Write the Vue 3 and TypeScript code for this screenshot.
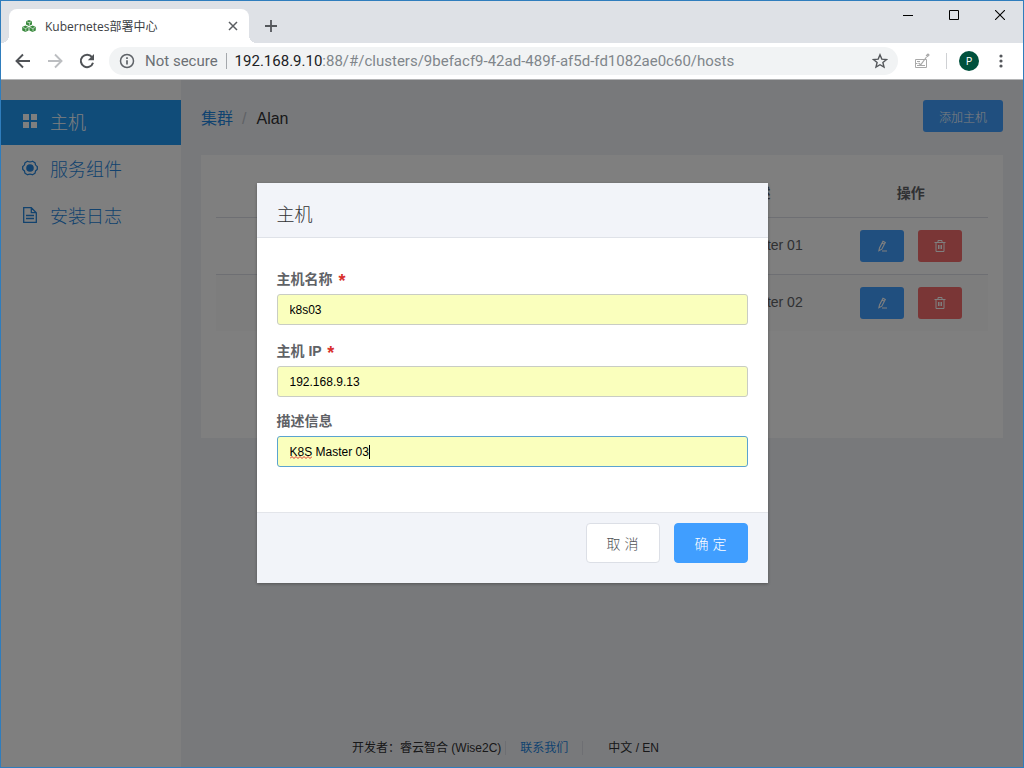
<script setup lang="ts">
import { ref } from 'vue'

interface MenuItem {
  icon: 'grid' | 'gear' | 'doc'
  label: string
  active: boolean
}

interface Host {
  id: number
  description: string
}

const menu: MenuItem[] = [
  { icon: 'grid', label: '主机', active: true },
  { icon: 'gear', label: '服务组件', active: false },
  { icon: 'doc', label: '安装日志', active: false },
]

const hosts: Host[] = [
  { id: 1, description: 'K8S Master 01' },
  { id: 2, description: 'K8S Master 02' },
]

const hostName = ref('k8s03')
const hostIp = ref('192.168.9.13')
const description = ref('K8S Master 03')
</script>

<template>
  <div class="window">
    <header class="chrome">
      <div class="tabstrip">
        <div class="tab">
          <svg class="favicon" viewBox="0 0 14 12" width="14" height="12" aria-hidden="true">
            <g fill="#3a8a3e">
              <path d="M7 0l3 1.200v3.400L7 6 4 4.600V1.200z" />
              <path d="M3.400 5.600l3.200 1.300v3.600L3.400 12 .2 10.500V6.900z" />
              <path d="M10.600 5.600l3.200 1.300v3.600L10.600 12l-3.200-1.500V6.900z" />
            </g>
            <g fill="none" stroke="#fff" stroke-width=".6">
              <path d="M4.500 1.700L7 2.700l2.500-1M7.400 2.800v2.700M.8 7.400l2.600 1.100 2.600-1.100M3.800 8.500v2.900M8 7.400l2.600 1.100 2.600-1.100M11 8.500v2.900" />
            </g>
          </svg>
          <span class="tab-title">Kubernetes部署中心</span>
          <button class="icon-btn tab-close" type="button" aria-label="Close tab">
            <svg viewBox="0 0 10 10" width="10" height="10"><path d="M1 1l8 8M9 1L1 9" stroke="#5a5d61" stroke-width="1.500" /></svg>
          </button>
        </div>
        <button class="icon-btn new-tab" type="button" aria-label="New tab">
          <svg viewBox="0 0 12 12" width="12" height="12"><path d="M6 0v12M0 6h12" stroke="#54575b" stroke-width="1.800" /></svg>
        </button>
        <div class="window-controls">
          <button class="icon-btn" type="button" aria-label="Minimize">
            <svg viewBox="0 0 10 10" width="10" height="10"><path d="M0 5.500h10" stroke="#000" /></svg>
          </button>
          <button class="icon-btn" type="button" aria-label="Maximize">
            <svg viewBox="0 0 10 10" width="10" height="10"><path d="M.5.5h9v9h-9z" fill="none" stroke="#000" /></svg>
          </button>
          <button class="icon-btn" type="button" aria-label="Close">
            <svg viewBox="0 0 10 10" width="10" height="10"><path d="M0 0l10 10M10 0L0 10" stroke="#000" stroke-width="1.100" /></svg>
          </button>
        </div>
      </div>
      <div class="toolbar">
        <button class="icon-btn nav" type="button" aria-label="Back">
          <svg viewBox="0 0 16 16" width="16" height="16"><path d="M15 8H2M8 1.500L1.500 8 8 14.500" fill="none" stroke="#505357" stroke-width="1.900" /></svg>
        </button>
        <button class="icon-btn nav" type="button" aria-label="Forward">
          <svg viewBox="0 0 16 16" width="16" height="16"><path d="M1 8h13M8 1.500L14.500 8 8 14.500" fill="none" stroke="#bcbec1" stroke-width="1.900" /></svg>
        </button>
        <button class="icon-btn nav" type="button" aria-label="Reload">
          <svg viewBox="0 0 16 16" width="16" height="16"><path d="M13 4.200A6.200 6.200 0 1 0 14 9.700" fill="none" stroke="#505357" stroke-width="2" /><path d="M15 1v6.200H8.800z" fill="#505357" /></svg>
        </button>
        <div class="omnibox">
          <svg class="info" viewBox="0 0 16 16" width="16" height="16" aria-hidden="true"><circle cx="8" cy="8" r="6.500" fill="none" stroke="#5f6368" stroke-width="1.500" /><path d="M8 7.200v4.400M8 4.300v1.700" stroke="#5f6368" stroke-width="1.700" /></svg>
          <span class="security">Not secure</span>
          <span class="omni-divider"></span>
          <span class="url"><span class="url-host">192.168.9.10</span>:88/#/clusters/9befacf9-42ad-489f-af5d-fd1082ae0c60/hosts</span>
          <button class="icon-btn" type="button" aria-label="Bookmark this page">
            <svg viewBox="0 0 16 16" width="16" height="16"><path d="M8 1.800l1.800 4.300 4.700.4-3.600 3 1.100 4.600L8 11.700l-4 2.400 1.100-4.600-3.600-3 4.700-.4z" fill="none" stroke="#54575b" stroke-width="1.400" /></svg>
          </button>
        </div>
        <button class="icon-btn extension" type="button" aria-label="Extension">
          <svg viewBox="0 0 16 16" width="16" height="16"><path d="M1.500 6.500h11v8h-11zM3 12.500h8M3 8.500h3M1.500 10.500h2" fill="none" stroke="#a9a9a9" /><path d="M4.500 10l2.200 1.800 5.800-7.800M12.500 2.500l1.500-1.500 1 1-1.500 1.500z" fill="none" stroke="#a9a9a9" stroke-width="1.200" /></svg>
        </button>
        <span class="bar-divider"></span>
        <button class="avatar" type="button" aria-label="Profile P">P</button>
        <button class="icon-btn more" type="button" aria-label="Menu">
          <svg viewBox="0 0 4 14" width="4" height="14"><g fill="#54575b"><circle cx="2" cy="2" r="1.600" /><circle cx="2" cy="7" r="1.600" /><circle cx="2" cy="12" r="1.600" /></g></svg>
        </button>
      </div>
    </header>

    <div class="page">
      <nav class="sidebar">
        <a v-for="item in menu" :key="item.label" href="#" class="menu-item" :class="{ active: item.active }">
          <svg v-if="item.icon === 'grid'" viewBox="0 0 16 16" width="16" height="16" aria-hidden="true"><path d="M1 1h6v6H1zM9 1h6v6H9zM1 9h6v6H1zM9 9h6v6H9z" fill="#fff" /></svg>
          <svg v-else-if="item.icon === 'gear'" viewBox="0 0 16 16" width="16" height="16" aria-hidden="true"><path d="M5.500 1.200Q8 2.600 10.500 1.200L13 2.700Q13 5.500 15.300 6.700v2.600Q13 10.500 13 13.300L10.500 14.800Q8 13.400 5.500 14.800L3 13.300Q3 10.500.7 9.300V6.700Q3 5.500 3 2.700z" fill="none" stroke="#2585dc" stroke-width="1.300" stroke-linejoin="round" /><circle cx="8" cy="8" r="3.800" fill="#2585dc" /></svg>
          <svg v-else viewBox="0 0 16 16" width="16" height="16" aria-hidden="true"><path d="M1.700.7h7.600l5 5v9.600H1.700zM9.300.7v5h5M4 8.500h8M4 11.500h8" fill="none" stroke="#2585dc" stroke-width="1.300" /></svg>
          <span>{{ item.label }}</span>
        </a>
      </nav>

      <main class="main">
        <div class="main-head">
          <div class="breadcrumb">
            <a href="#">集群</a><span class="slash">/</span><span>Alan</span>
          </div>
          <button class="btn-add" type="button">添加主机</button>
        </div>
        <section class="card">
          <table class="hosts">
            <colgroup>
              <col class="col-rest" />
              <col class="col-one" />
              <col class="col-one" />
            </colgroup>
            <thead>
              <tr>
                <td></td>
                <th scope="col">描述</th>
                <th scope="col">操作</th>
              </tr>
            </thead>
            <tbody>
              <tr v-for="host in hosts" :key="host.id">
                <td></td>
                <td class="desc">{{ host.description }}</td>
                <td>
                  <div class="actions">
                    <button class="act edit" type="button" aria-label="Edit">
                      <svg viewBox="0 0 12 12" width="12" height="12"><path d="M7 1.200l2.300 1.200-3.500 6.800-2.900 1.500.6-2.700zM6 3.100l2.300 1.200M6 11h5" fill="none" stroke="#fff" stroke-width="1.100" /></svg>
                    </button>
                    <button class="act del" type="button" aria-label="Delete">
                      <svg viewBox="0 0 12 12" width="12" height="12"><path d="M.5 2.500h11M4 2.500v-2h4v2M2 2.500v9h8v-9M4.500 5v4M6 5v4M7.500 5v4" fill="none" stroke="#fff" /></svg>
                    </button>
                  </div>
                </td>
              </tr>
            </tbody>
          </table>
        </section>
      </main>

      <footer class="footer">
        <span class="dev">开发者：睿云智合 (Wise2C)</span>
        <a href="#" class="contact">联系我们</a>
        <span class="lang">中文 / EN</span>
      </footer>

      <div class="overlay">
        <form class="dialog" role="dialog" aria-labelledby="dialog-title" autocomplete="off" @submit.prevent>
          <h2 id="dialog-title" class="dialog-head">主机</h2>
          <div class="dialog-body">
            <div class="field required">
              <label for="host-name">主机名称 <span class="req">*</span></label>
              <input id="host-name" v-model="hostName" type="text" spellcheck="false" />
            </div>
            <div class="field required">
              <label for="host-ip">主机 IP <span class="req">*</span></label>
              <input id="host-ip" v-model="hostIp" type="text" spellcheck="false" />
            </div>
            <div class="field">
              <label for="host-desc">描述信息</label>
              <div class="focus-wrap">
                <input id="host-desc" v-model="description" class="focused" type="text" spellcheck="false" />
                <svg class="squiggle" viewBox="0 0 22 3" width="22" height="3" aria-hidden="true"><path d="M0 2.500l2-2 2 2 2-2 2 2 2-2 2 2 2-2 2 2 2-2 2 2 2-2" fill="none" stroke="#d9302c" /></svg>
                <span class="caret"></span>
              </div>
            </div>
          </div>
          <div class="dialog-foot">
            <button class="btn cancel" type="button">取 消</button>
            <button class="btn confirm" type="submit">确 定</button>
          </div>
        </form>
      </div>
    </div>
  </div>
</template>

<style>
body {
  margin: 0;
}
</style>

<style scoped>
.window,
.window * {
  box-sizing: border-box;
}
.window {
  min-height: 100vh;
  display: flex;
  flex-direction: column;
  border: 1px solid #2f7dbd;
  background: #fff;
  font-family: "Liberation Sans", "Noto Sans CJK SC", sans-serif;
  color: #303133;
}
button,
input {
  font-family: inherit;
}
svg {
  display: block;
  flex: none;
}
a {
  text-decoration: none;
}
.icon-btn {
  display: flex;
  align-items: center;
  justify-content: center;
  padding: 0;
  border: 0;
  background: none;
}

.chrome {
  font-family: "Open Sans", "Noto Sans CJK SC", sans-serif;
  border-bottom: 1px solid #b4b5b6;
}
.tabstrip {
  display: flex;
  height: 42px;
  background: #dee1e6;
  padding-left: 8px;
}
.tab {
  position: relative;
  display: flex;
  align-items: center;
  width: 240px;
  margin-top: 8px;
  padding: 0 10px 0 13px;
  background: #fff;
  border-radius: 8px 8px 0 0;
}
.tab::before,
.tab::after {
  content: "";
  position: absolute;
  bottom: 0;
  width: 8px;
  height: 8px;
}
.tab::before {
  right: 100%;
  background: radial-gradient(circle at 0 0, #dee1e6 8px, #fff 8px);
}
.tab::after {
  left: 100%;
  background: radial-gradient(circle at 100% 0, #dee1e6 8px, #fff 8px);
}
.tab-title {
  flex: 1;
  margin-left: 9px;
  font-size: 12px;
  color: #3c4043;
  white-space: nowrap;
}
.tab-close {
  width: 12px;
  height: 16px;
}
.new-tab {
  width: 28px;
  margin: 8px 0 0 8px;
}
.window-controls {
  display: flex;
  height: 28px;
  margin-left: auto;
}
.window-controls .icon-btn {
  width: 46px;
}
.toolbar {
  display: flex;
  align-items: center;
  height: 36px;
  padding: 0 14px 0 6px;
  background: #fff;
}
.nav {
  width: 32px;
  height: 32px;
}
.omnibox {
  flex: 1;
  display: flex;
  align-items: center;
  height: 28px;
  margin-left: 6px;
  padding: 0 10px;
  border-radius: 14px;
  background: #f1f3f4;
  font-family: Roboto, "Open Sans", sans-serif;
  font-size: 15px;
  color: #80868b;
  white-space: nowrap;
}
.security {
  margin-left: 10px;
  color: #6c7075;
}
.omni-divider {
  width: 1px;
  height: 16px;
  margin: 0 8px;
  background: #a4a8ac;
}
.url {
  flex: 1;
}
.url-host {
  color: #202124;
}
.extension {
  margin-left: 16px;
}
.bar-divider {
  width: 1px;
  height: 16px;
  margin: 0 12px 0 16px;
  background: #cfd1d4;
}
.avatar {
  width: 20px;
  height: 20px;
  padding: 0;
  border: 0;
  border-radius: 50%;
  background: #00513d;
  color: #fff;
  font-size: 11px;
  line-height: 20px;
}
.more {
  width: 16px;
  margin-left: 14px;
}

.page {
  position: relative;
  flex: 1;
  display: grid;
  grid-template-columns: 180px 1fr;
  grid-template-rows: 1fr 38px;
}
.sidebar {
  grid-column: 1;
  grid-row: 1 / 3;
  display: flex;
  flex-direction: column;
  gap: 2px;
  padding-top: 20px;
  background: #fff;
}
.menu-item {
  display: flex;
  align-items: center;
  gap: 12px;
  height: 45px;
  padding: 0 0 4px 21px;
  font-size: 18px;
  font-weight: 300;
  color: #2585dc;
}
.menu-item.active {
  background: #2098f3;
  color: #fff;
}
.main {
  grid-column: 2;
  grid-row: 1 / 3;
  padding: 20px;
  background: #f0f3f7;
}
.main-head {
  display: flex;
  justify-content: space-between;
  align-items: flex-start;
  height: 55px;
}
.breadcrumb {
  font-size: 16px;
  line-height: 38px;
}
.breadcrumb a {
  color: #1f86e0;
}
.slash {
  margin: 0 10px 0 9px;
  color: #c0c4cc;
}
.btn-add {
  width: 80px;
  height: 32px;
  padding: 0;
  border: 0;
  border-radius: 3px;
  background: #409eff;
  color: #fff;
  font-size: 12px;
  font-weight: 300;
}
.card {
  min-height: 283px;
  padding: 15px;
  background: #fff;
}
.hosts {
  width: 100%;
  border-collapse: collapse;
  table-layout: fixed;
  font-size: 14px;
  text-align: center;
  color: #606266;
}
.hosts td,
.hosts th {
  padding: 0;
}
.hosts th,
.hosts .desc {
  padding-bottom: 2px;
}
.col-rest {
  width: 60%;
}
.col-one {
  width: 20%;
}
.hosts thead tr {
  height: 47px;
}
.hosts tbody tr {
  height: 57px;
}
.hosts tbody tr:not(:last-child),
.hosts thead tr {
  border-bottom: 1px solid #dcdfe6;
}
.hosts tbody tr:nth-child(2) {
  background: #fafafa;
}
.actions {
  display: flex;
  justify-content: center;
  gap: 14px;
}
.act {
  display: flex;
  align-items: center;
  justify-content: center;
  width: 44px;
  height: 32px;
  padding: 0;
  border: 0;
  border-radius: 3px;
}
.edit {
  background: #409eff;
}
.del {
  background: #f56c6c;
}
.footer {
  grid-column: 1 / 3;
  grid-row: 2;
  display: flex;
  align-items: center;
  justify-content: center;
  padding-right: 13px;
  font-size: 12px;
  line-height: 14px;
}
.dev {
  padding-right: 4px;
  border-right: 1px solid #dcdfe6;
}
.contact {
  padding: 0 14px;
  border-right: 1px solid #dcdfe6;
  color: #1f86e0;
}
.lang {
  padding-left: 25px;
}

.overlay {
  position: absolute;
  inset: 0;
  display: flex;
  justify-content: center;
  align-items: flex-start;
  padding-top: 103px;
  background: rgba(0, 0, 0, 0.5);
}
.dialog {
  width: 50%;
  background: #fff;
  box-shadow: 0 1px 3px rgba(0, 0, 0, 0.3);
}
.dialog-head {
  height: 55px;
  margin: 0;
  padding: 5px 20px 0;
  border-bottom: 1px solid #dfe2e8;
  background: #f2f4f9;
  font-size: 18px;
  font-weight: 300;
  line-height: 54px;
}
.dialog-body {
  display: flex;
  flex-direction: column;
  gap: 14px;
  padding: 29px 20px 45px;
}
.field label {
  display: block;
  height: 25px;
  font-size: 14px;
  font-weight: 700;
  line-height: 20px;
  color: #606266;
}
.field.required label {
  height: 27px;
  line-height: 24px;
}
.req {
  margin-left: 2px;
  font-size: 18px;
  line-height: 18px;
  vertical-align: -3px;
  color: #d9302c;
}
.field input {
  display: block;
  width: 100%;
  height: 31px;
  padding: 0 12px;
  border: 1px solid #c9cdc4;
  border-radius: 3px;
  outline: none;
  background: #faffbd;
  font-size: 12px;
  color: #000;
}
.field input.focused {
  border-color: #5aa3d0;
}
.focus-wrap {
  position: relative;
}
.squiggle {
  position: absolute;
  left: 13px;
  top: 20px;
}
.caret {
  position: absolute;
  left: 92px;
  top: 9px;
  width: 1px;
  height: 14px;
  background: #000;
}
.dialog-foot {
  display: flex;
  justify-content: flex-end;
  gap: 14px;
  padding: 10px 20px 20px;
  border-top: 1px solid #e3e5ea;
  background: #f2f4f9;
}
.btn {
  width: 74px;
  height: 40px;
  padding: 0;
  border: 1px solid #dcdfe6;
  border-radius: 4px;
  background: #fff;
  color: #505255;
  font-size: 14px;
  font-weight: 300;
}
.confirm {
  border-color: #409eff;
  background: #409eff;
  color: #fff;
}
</style>
